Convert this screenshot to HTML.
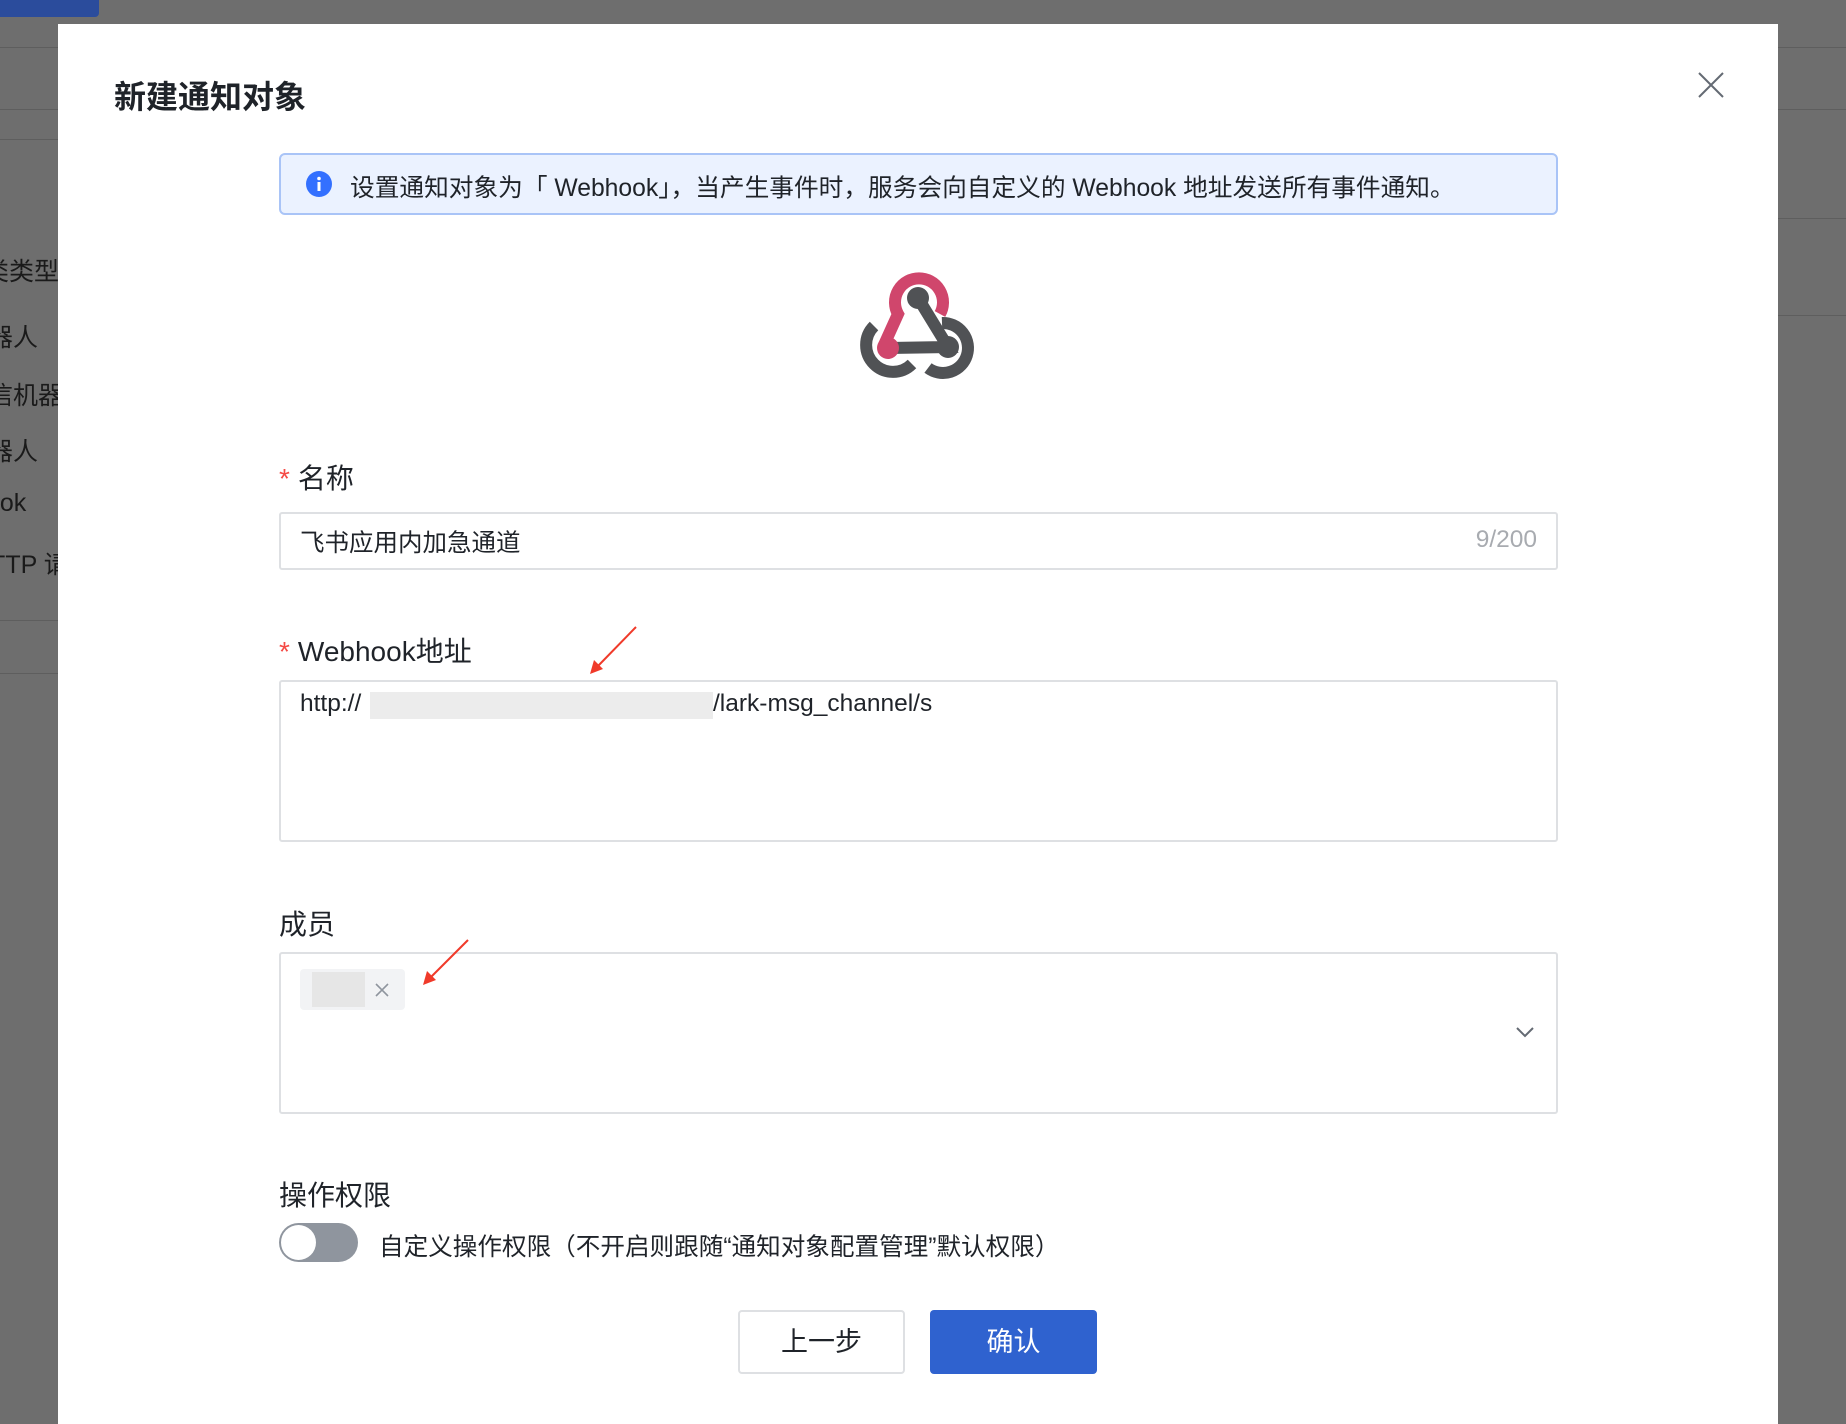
<!DOCTYPE html>
<html><head><meta charset="utf-8"><style>
*{box-sizing:border-box;margin:0;padding:0}
body{width:1846px;height:1406px;overflow:hidden;background:#6e6e6e;font-family:"Liberation Sans","Noto Sans CJK SC",sans-serif;position:relative;color:#1f2329}
.a{position:absolute}
.bg{color:#1a1a1a;font-size:25px}
.modal{left:58px;top:24px;width:1720px;height:1400px;background:#fff}
.lab{font-size:28px;color:#1f2329}
.lab .s{color:#f54a45;margin-right:8px}
.box{border:2px solid #dee0e3;border-radius:3px;background:#fff}
</style></head><body>
<div class="a" style="left:0;top:0;width:99px;height:17px;background:#2b4c9c;border-radius:0 0 4px 0"></div>
<div class="a" style="left:0;top:47px;width:58px;height:1px;background:#5e5e5e"></div>
<div class="a" style="left:0;top:109px;width:58px;height:1px;background:#5e5e5e"></div>
<div class="a" style="left:0;top:139px;width:58px;height:1px;background:#5e5e5e"></div>
<div class="a" style="left:0;top:620px;width:58px;height:1px;background:#5e5e5e"></div>
<div class="a" style="left:0;top:673px;width:58px;height:1px;background:#5e5e5e"></div>
<div class="a" style="left:1778px;top:47px;width:68px;height:1px;background:#5e5e5e"></div>
<div class="a" style="left:1778px;top:109px;width:68px;height:1px;background:#5e5e5e"></div>
<div class="a" style="left:1778px;top:218px;width:68px;height:1px;background:#5e5e5e"></div>
<div class="a" style="left:1778px;top:315px;width:68px;height:1px;background:#5e5e5e"></div>
<div class="a bg" style="left:-16px;top:252px">类类型</div>
<div class="a bg" style="left:-12px;top:318px">器人</div>
<div class="a bg" style="left:-12px;top:376px">信机器</div>
<div class="a bg" style="left:-12px;top:432px">器人</div>
<div class="a bg" style="left:-14px;top:489px">ook</div>
<div class="a bg" style="left:-28px;top:545px">HTTP 请</div>

<div class="a modal"></div>
<div class="a" style="left:114px;top:72px;font-size:32px;font-weight:bold">新建通知对象</div>
<svg class="a" style="left:1698px;top:72px" width="26" height="26" viewBox="0 0 26 26"><path d="M1 1L25 25M25 1L1 25" stroke="#646a73" stroke-width="2"/></svg>

<div class="a" style="left:279px;top:153px;width:1279px;height:62px;background:#ebf2ff;border:2px solid #a9c4f7;border-radius:6px"></div>
<svg class="a" style="left:306px;top:171px" width="26" height="26" viewBox="0 0 26 26"><circle cx="13" cy="13" r="13" fill="#3370ff"/><rect x="11.5" y="11" width="3" height="9" fill="#fff"/><circle cx="13" cy="7.5" r="1.8" fill="#fff"/></svg>
<div class="a" style="left:350px;top:168px;font-size:24.7px;color:#1f2329;white-space:nowrap">设置通知对象为「 Webhook」，当产生事件时，服务会向自定义的 Webhook 地址发送所有事件通知。</div>

<svg class="a" style="left:850px;top:260px" width="140" height="130" viewBox="850 260 140 130">
<g fill="none" stroke-width="12" stroke-linecap="butt">
<path d="M940 314 A24 24 0 1 0 898 314 L884 345" stroke="#d0466c"/>
<path d="M874 326 A25 25 0 1 0 912 364" stroke="#505255"/>
<path d="M942 323 A25 25 0 1 1 928 368" stroke="#505255"/>
<path d="M918 298 L948 347 L888 348" stroke="#505255"/>
</g>
<circle cx="918" cy="298" r="11" fill="#505255"/>
<circle cx="948" cy="347" r="11" fill="#505255"/>
<circle cx="888" cy="348" r="11" fill="#d0466c"/>
</svg>

<div class="a lab" style="left:279px;top:457px"><span class="s">*</span>名称</div>
<div class="a box" style="left:279px;top:512px;width:1279px;height:58px"></div>
<div class="a" style="left:300px;top:524px;font-size:24.5px">飞书应用内加急通道</div>
<div class="a" style="left:1468px;top:526px;width:69px;text-align:right;font-size:24.5px;color:#a8abb0">9/200</div>

<div class="a lab" style="left:279px;top:630px"><span class="s">*</span>Webhook地址</div>
<div class="a box" style="left:279px;top:680px;width:1279px;height:162px"></div>
<div class="a" style="left:300px;top:690px;font-size:24.5px">http://</div>
<div class="a" style="left:370px;top:692px;width:343px;height:27px;background:#ececec"></div>
<div class="a" style="left:713px;top:690px;font-size:24.5px">/lark-msg_channel/s</div>
<svg class="a" style="left:580px;top:620px" width="70" height="60" viewBox="580 620 70 60"><path d="M636 627L598 666" stroke="#f03a2a" stroke-width="2"/><path d="M590 674L594 660L603 669Z" fill="#f03a2a"/></svg>

<div class="a lab" style="left:279px;top:903px">成员</div>
<div class="a box" style="left:279px;top:952px;width:1279px;height:162px"></div>
<div class="a" style="left:300px;top:969px;width:105px;height:41px;background:#f2f3f5;border-radius:4px"></div>
<div class="a" style="left:312px;top:972px;width:53px;height:35px;background:#e6e6e6"></div>
<svg class="a" style="left:375px;top:983px" width="14" height="14" viewBox="0 0 14 14"><path d="M1 1L13 13M13 1L1 13" stroke="#8f959e" stroke-width="1.6"/></svg>
<svg class="a" style="left:1515px;top:1025px" width="20" height="14" viewBox="0 0 20 14"><path d="M2 3L10 11L18 3" fill="none" stroke="#646a73" stroke-width="2"/></svg>
<svg class="a" style="left:415px;top:935px" width="60" height="55" viewBox="415 935 60 55"><path d="M468 940L431 977" stroke="#f03a2a" stroke-width="2"/><path d="M423 985L427 971L436 980Z" fill="#f03a2a"/></svg>

<div class="a lab" style="left:279px;top:1174px">操作权限</div>
<div class="a" style="left:279px;top:1223px;width:79px;height:39px;background:#8f959e;border-radius:20px"></div>
<div class="a" style="left:281px;top:1225px;width:35px;height:35px;background:#fff;border-radius:50%"></div>
<div class="a" style="left:379px;top:1227px;font-size:24.6px;white-space:nowrap">自定义操作权限（不开启则跟随“通知对象配置管理”默认权限）</div>

<div class="a" style="left:738px;top:1310px;width:167px;height:64px;border:2px solid #dee0e3;border-radius:4px;background:#fff;font-size:27px;text-align:center;line-height:60px">上一步</div>
<div class="a" style="left:930px;top:1310px;width:167px;height:64px;background:#2f62cf;border-radius:4px;color:#fff;font-size:27px;text-align:center;line-height:64px">确认</div>
</body></html>
